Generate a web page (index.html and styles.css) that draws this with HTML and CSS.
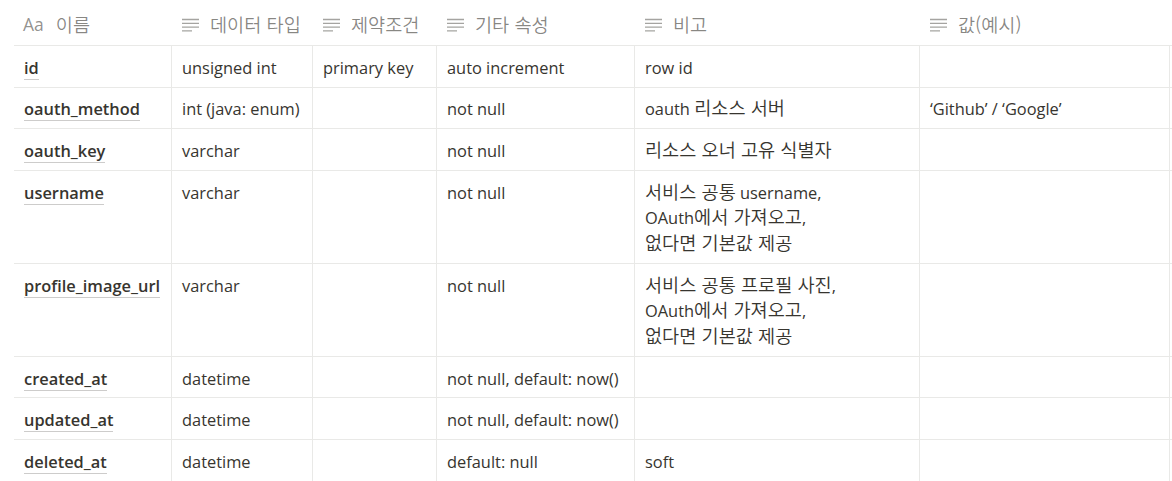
FILE: index.html
```html
<!DOCTYPE html>
<html lang="ko">
<head>
<meta charset="utf-8">
<title>users</title>
<link rel="stylesheet" href="styles.css">
</head>
<body>
<div class="table">
  <div class="row head">
    <div class="cell c1"><span class="ico-aa">Aa</span><span class="ko">이름</span></div>
    <div class="cell c2"><svg class="ico" viewBox="0 0 17 14"><path d="M0 1.5H17M0 5.3H17M0 9.1H17M0 12.8H10"/></svg><span class="ko">데이터 타입</span></div>
    <div class="cell c3"><svg class="ico" viewBox="0 0 17 14"><path d="M0 1.5H17M0 5.3H17M0 9.1H17M0 12.8H10"/></svg><span class="ko">제약조건</span></div>
    <div class="cell c4"><svg class="ico" viewBox="0 0 17 14"><path d="M0 1.5H17M0 5.3H17M0 9.1H17M0 12.8H10"/></svg><span class="ko">기타 속성</span></div>
    <div class="cell c5"><svg class="ico" viewBox="0 0 17 14"><path d="M0 1.5H17M0 5.3H17M0 9.1H17M0 12.8H10"/></svg><span class="ko">비고</span></div>
    <div class="cell c6"><svg class="ico" viewBox="0 0 17 14"><path d="M0 1.5H17M0 5.3H17M0 9.1H17M0 12.8H10"/></svg><span class="ko">값(예시)</span></div>
  </div>
  <div class="row">
    <div class="cell c1"><span class="title">id</span></div>
    <div class="cell c2">unsigned int</div>
    <div class="cell c3">primary key</div>
    <div class="cell c4">auto increment</div>
    <div class="cell c5">row id</div>
    <div class="cell c6"></div>
  </div>
  <div class="row">
    <div class="cell c1"><span class="title">oauth_method</span></div>
    <div class="cell c2">int (java: enum)</div>
    <div class="cell c3"></div>
    <div class="cell c4">not null</div>
    <div class="cell c5">oauth <span class="ko">리소스 서버</span></div>
    <div class="cell c6">‘Github’ / ‘Google’</div>
  </div>
  <div class="row">
    <div class="cell c1"><span class="title">oauth_key</span></div>
    <div class="cell c2">varchar</div>
    <div class="cell c3"></div>
    <div class="cell c4">not null</div>
    <div class="cell c5"><span class="ko">리소스 오너 고유 식별자</span></div>
    <div class="cell c6"></div>
  </div>
  <div class="row">
    <div class="cell c1"><span class="title">username</span></div>
    <div class="cell c2">varchar</div>
    <div class="cell c3"></div>
    <div class="cell c4">not null</div>
    <div class="cell c5"><span class="ko">서비스 공통</span> username,<br>OAuth<span class="ko">에서 가져오고</span>,<br><span class="ko">없다면 기본값 제공</span></div>
    <div class="cell c6"></div>
  </div>
  <div class="row">
    <div class="cell c1"><span class="title">profile_image_url</span></div>
    <div class="cell c2">varchar</div>
    <div class="cell c3"></div>
    <div class="cell c4">not null</div>
    <div class="cell c5"><span class="ko">서비스 공통 프로필 사진</span>,<br>OAuth<span class="ko">에서 가져오고</span>,<br><span class="ko">없다면 기본값 제공</span></div>
    <div class="cell c6"></div>
  </div>
  <div class="row">
    <div class="cell c1"><span class="title">created_at</span></div>
    <div class="cell c2">datetime</div>
    <div class="cell c3"></div>
    <div class="cell c4">not null, default: now()</div>
    <div class="cell c5"></div>
    <div class="cell c6"></div>
  </div>
  <div class="row">
    <div class="cell c1"><span class="title">updated_at</span></div>
    <div class="cell c2">datetime</div>
    <div class="cell c3"></div>
    <div class="cell c4">not null, default: now()</div>
    <div class="cell c5"></div>
    <div class="cell c6"></div>
  </div>
  <div class="row">
    <div class="cell c1"><span class="title">deleted_at</span></div>
    <div class="cell c2">datetime</div>
    <div class="cell c3"></div>
    <div class="cell c4">default: null</div>
    <div class="cell c5">soft</div>
    <div class="cell c6"></div>
  </div>
</div>
</body>
</html>
```

FILE: styles.css
```css
* { box-sizing: border-box; }
html, body { margin: 0; padding: 0; background: #fff; }
body {
  padding-left: 14px;
  font-family: "Open Sans", "Noto Sans CJK KR", sans-serif;
  font-size: 16.4px;
  color: rgb(55, 53, 47);
}
.ko {
  font-family: "Noto Sans CJK KR", sans-serif;
  font-size: 18.6px;
  font-weight: 350;
  line-height: 1;
}
.table { width: 1158px; }
.row {
  display: flex;
  border-bottom: 1px solid rgb(233, 233, 231);
}
.cell {
  flex: none;
  padding: 8.9px 10px 6px;
  line-height: 25.7px;
  border-right: 1px solid rgb(233, 233, 231);
  white-space: nowrap;
  overflow: hidden;
}
.c1 { width: 158px; }
.c2 { width: 141px; }
.c3 { width: 124px; }
.c4 { width: 198px; }
.c5 { width: 285px; }
.c6 { width: 250px; }

.head { height: 46px; }
.head .cell {
  border-right: 1px solid transparent;
  display: flex;
  align-items: center;
  gap: 11px;
  color: rgba(55, 53, 47, 0.6);
  padding-top: 4px;
  padding-bottom: 0;
}
.head .c1 { padding-left: 9px; gap: 12px; }
.ico-aa { font-size: 17.5px; color: rgba(55, 53, 47, 0.55); }
.ico {
  width: 17px;
  height: 14px;
  flex: none;
  fill: none;
  stroke: rgba(55, 53, 47, 0.45);
  stroke-width: 1.3;
}
.title {
  font-weight: 600;
  border-bottom: 1px solid rgba(55, 53, 47, 0.25);
}
```
